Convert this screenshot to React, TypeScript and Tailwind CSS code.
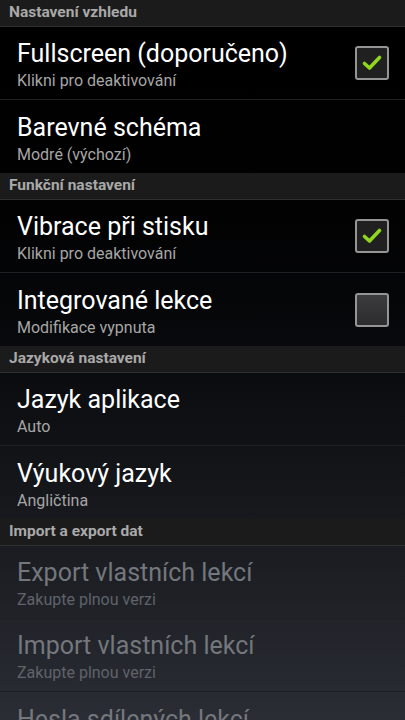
const font = { fontFamily: "Roboto, 'Noto Sans', sans-serif" };

type Item = {
  title: string;
  summary: string;
  check?: boolean;
  disabled?: boolean;
};

type Section = { header: string; items: Item[] };

const sections: Section[] = [
  {
    header: "Nastavení vzhledu",
    items: [
      { title: "Fullscreen (doporučeno)", summary: "Klikni pro deaktivování", check: true },
      { title: "Barevné schéma", summary: "Modré (výchozí)" },
    ],
  },
  {
    header: "Funkční nastavení",
    items: [
      { title: "Vibrace při stisku", summary: "Klikni pro deaktivování", check: true },
      { title: "Integrované lekce", summary: "Modifikace vypnuta", check: false },
    ],
  },
  {
    header: "Jazyková nastavení",
    items: [
      { title: "Jazyk aplikace", summary: "Auto" },
      { title: "Výukový jazyk", summary: "Angličtina" },
    ],
  },
  {
    header: "Import a export dat",
    items: [
      { title: "Export vlastních lekcí", summary: "Zakupte plnou verzi", disabled: true },
      { title: "Import vlastních lekcí", summary: "Zakupte plnou verzi", disabled: true },
      { title: "Hesla sdílených lekcí", summary: "Zakupte plnou verzi", disabled: true },
    ],
  },
];

function CheckBox({ checked }: { checked: boolean }) {
  return (
    <div
      className={
        "flex h-[34px] w-[34px] items-center justify-center rounded-[3px] border-2 border-[#959595] " +
        (checked ? "bg-[#202020]" : "bg-gradient-to-b from-[#3c3c3f] to-[#2c2c2f]")
      }
    >
      {checked ? (
        <svg width="22" height="22" viewBox="0 0 22 22">
          <path
            d="M3.5 11.5 L8.5 16 L18.5 5.5"
            fill="none"
            stroke="#8fd61c"
            strokeWidth="3.6"
            strokeLinecap="round"
            strokeLinejoin="round"
          />
        </svg>
      ) : null}
    </div>
  );
}

function Row({ item, last }: { item: Item; last: boolean }) {
  return (
    <div
      className={
        "flex h-[73px] items-center pl-[17px] pr-[16px] " +
        (last ? "" : "border-b border-[#1e2024]")
      }
    >
      <div className="flex min-w-0 flex-1 flex-col pt-[4px]">
        <span
          className={
            "whitespace-nowrap text-[25px] leading-[30px] " +
            (item.disabled ? "text-[#74777c]" : "text-white")
          }
        >
          {item.title}
        </span>
        <span
          className={
            "mt-[1px] whitespace-nowrap text-[16px] leading-[21px] " +
            (item.disabled ? "text-[#606369]" : "text-[#a6a6a6]")
          }
        >
          {item.summary}
        </span>
      </div>
      {item.check !== undefined ? <CheckBox checked={item.check} /> : null}
    </div>
  );
}

export default function App() {
  return (
    <div
      className="h-[720px] w-[405px] overflow-hidden bg-gradient-to-b from-black to-[#2a2d34]"
      style={font}
    >
      {sections.map((s) => (
        <div key={s.header}>
          <div className="flex h-[27px] items-center border-b border-[#2e2f31] bg-[#1b1b1b] pl-[9px] text-[15.5px] font-bold text-[#a9a9a9]">
            {s.header}
          </div>
          {s.items.map((it, i) => (
            <Row key={it.title} item={it} last={i === s.items.length - 1} />
          ))}
        </div>
      ))}
    </div>
  );
}
